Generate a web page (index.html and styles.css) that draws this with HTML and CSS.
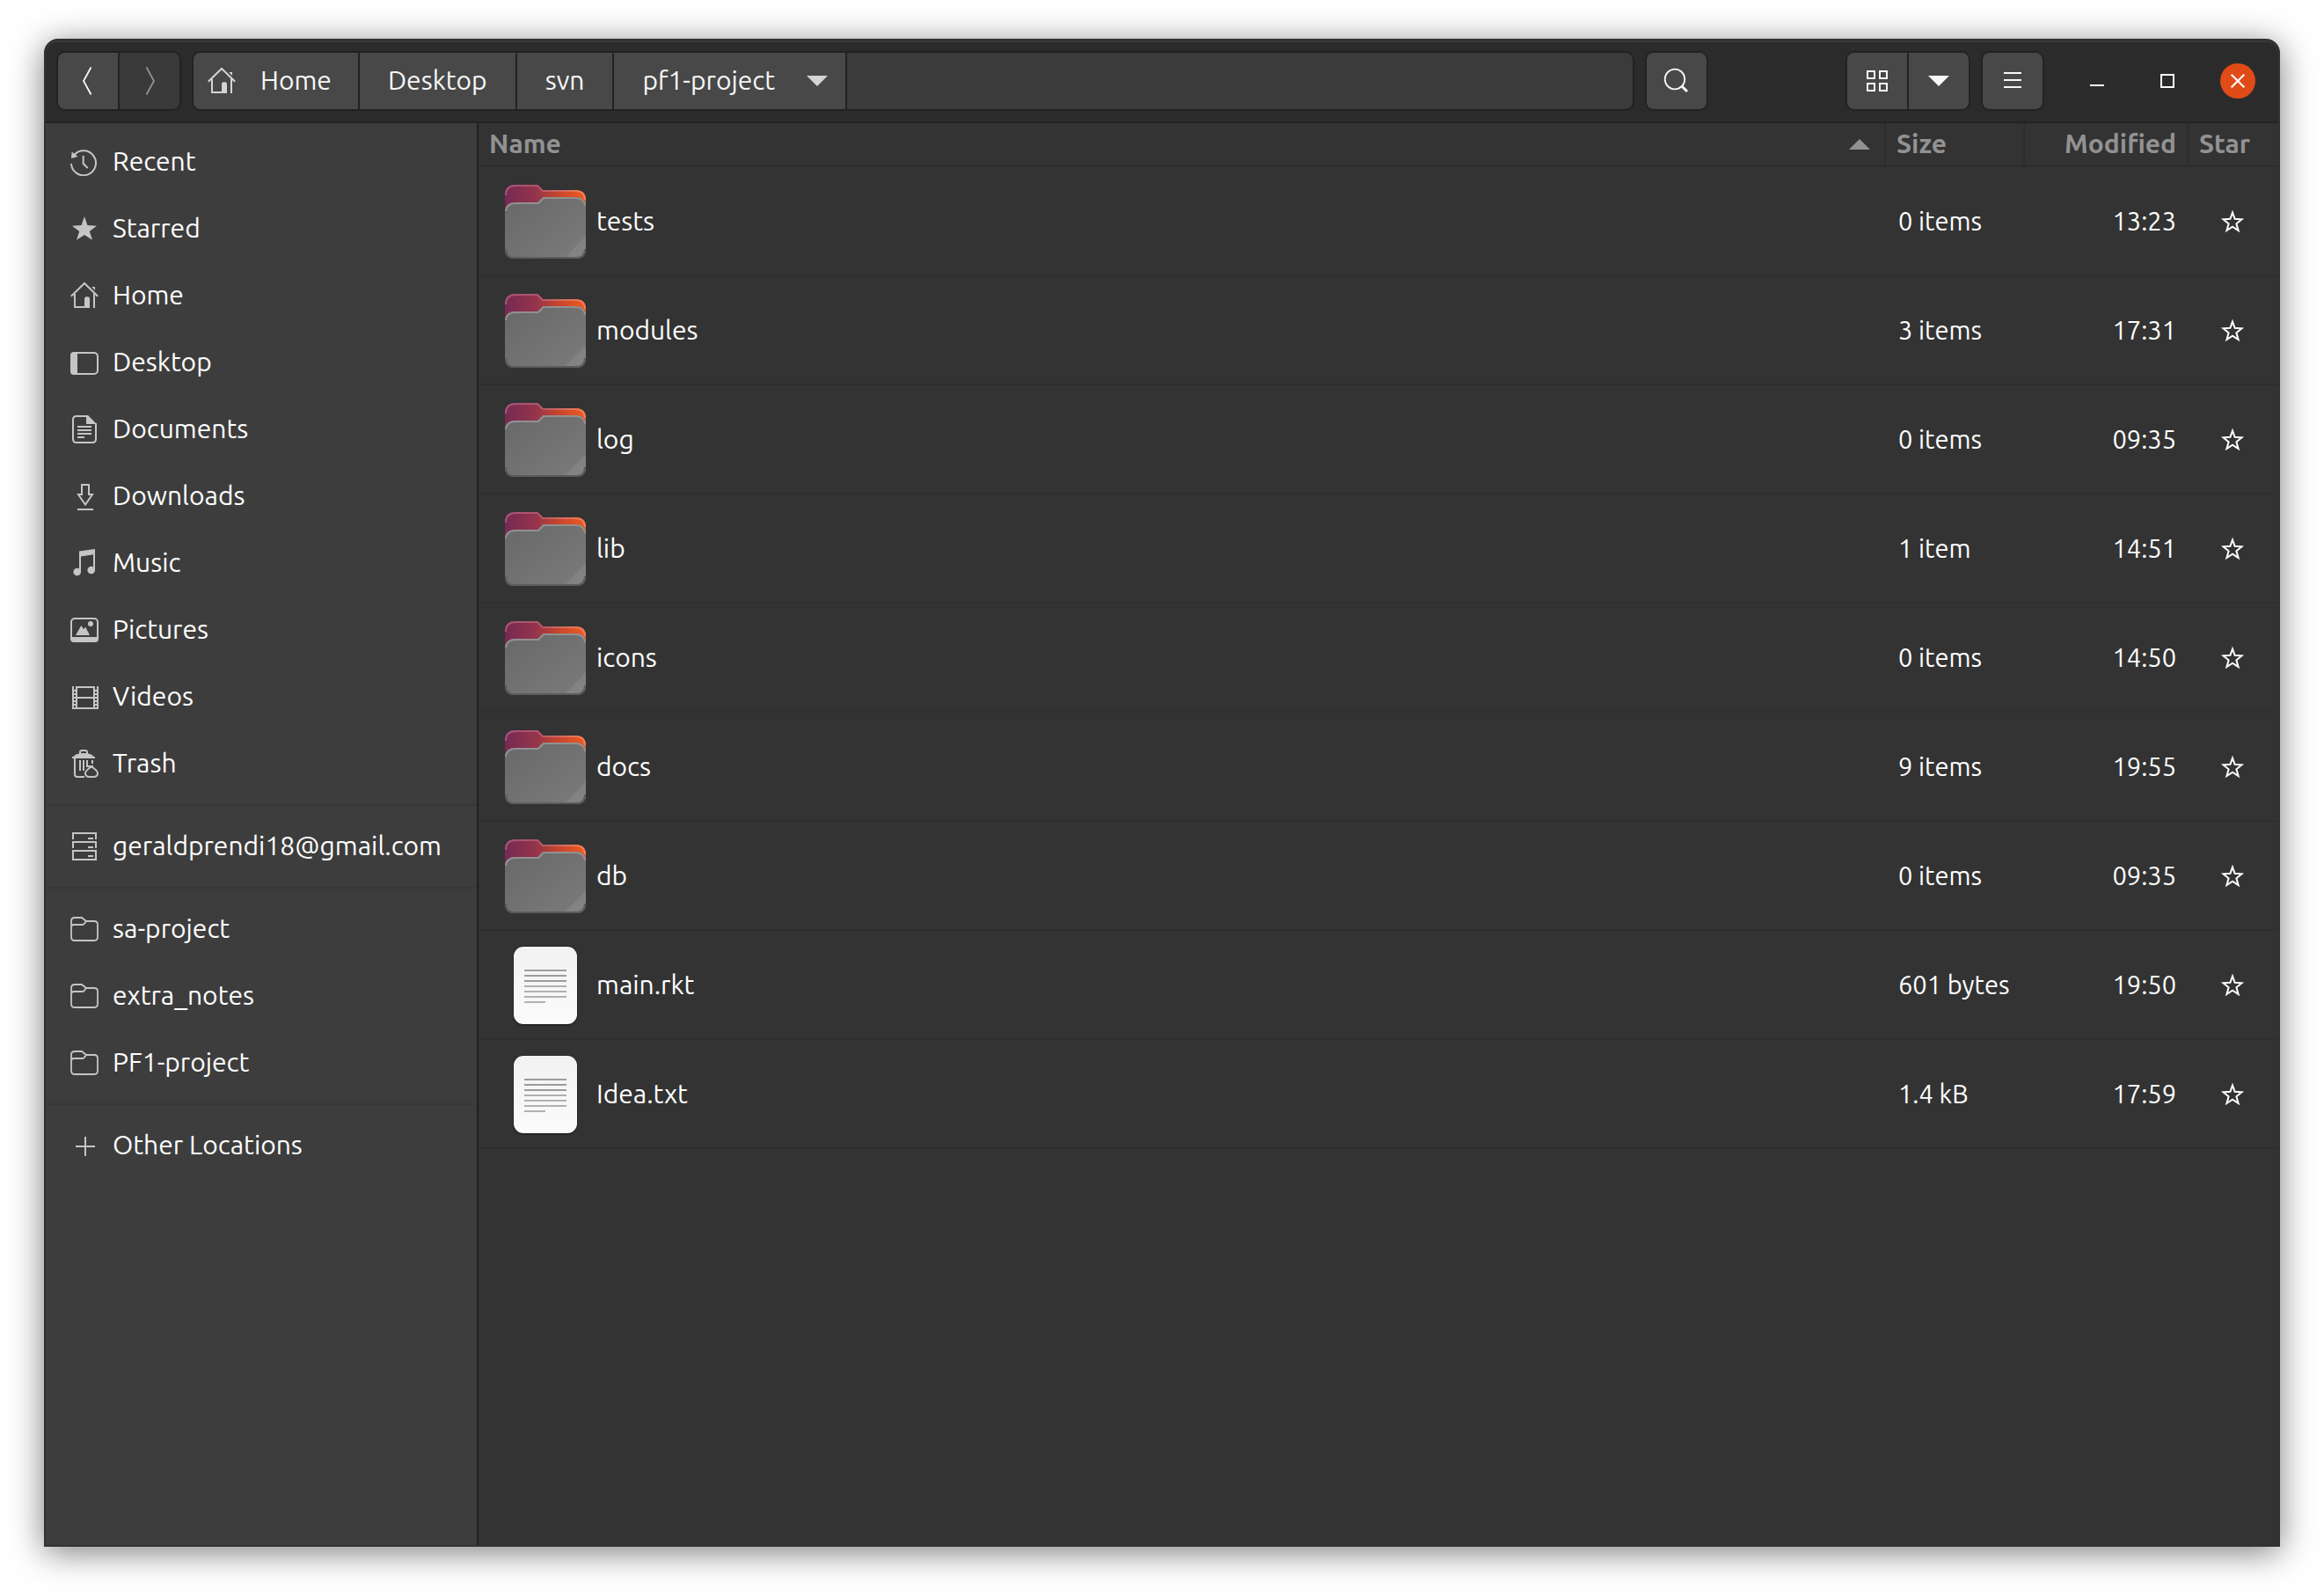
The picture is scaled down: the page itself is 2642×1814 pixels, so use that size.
FILE: index.html
```html
<!DOCTYPE html>
<html lang="en">
<head>
<meta charset="utf-8">
<meta name="viewport" content="width=device-width, initial-scale=1">
<title>pf1-project</title>
<link rel="stylesheet" href="styles.css">
</head>
<body>
<svg class="sprite" aria-hidden="true">
  <defs>
    <linearGradient id="folder-back" x1="0" y1="0" x2="1" y2="0">
      <stop offset="0" stop-color="#772953"/><stop offset=".38" stop-color="#94344c"/>
      <stop offset=".62" stop-color="#c0432f"/><stop offset="1" stop-color="#f05a22"/>
    </linearGradient>
    <linearGradient id="folder-edge" x1="0" y1="0" x2="1" y2="0">
      <stop offset="0" stop-color="#a4557c"/><stop offset=".4" stop-color="#b0556a"/><stop offset="1" stop-color="#f58055"/>
    </linearGradient>
    <linearGradient id="folder-front" x1="0" y1="0" x2="1" y2="1">
      <stop offset="0" stop-color="#686868"/><stop offset="1" stop-color="#7b7b7b"/>
    </linearGradient>
    <linearGradient id="paper" x1="0" y1="0" x2="0" y2="1">
      <stop offset="0" stop-color="#f2f2f2"/><stop offset="1" stop-color="#fbfbfb"/>
    </linearGradient>
  </defs>
  <symbol id="i-back" viewBox="0 0 32 32"><path d="M19.5.5 11 16l8.500 15.500" fill="none" stroke="currentColor" stroke-width="1.800"/></symbol>
  <symbol id="i-forward" viewBox="0 0 32 32"><path d="M12.500.5 21 16l-8.500 15.500" fill="none" stroke="currentColor" stroke-width="1.800"/></symbol>
  <symbol id="i-home" viewBox="0 0 32 32"><path d="M.8 16.700 16 2l15.200 14.700M5 14v15h14M27 13.500V30" fill="none" stroke="currentColor" stroke-width="2"/><path d="M16 30V19.500q0-2.200 2.200-2.200h1.600q2.200 0 2.200 2.200V30zM24.300 6H28v4z" fill="currentColor"/></symbol>
  <symbol id="i-down" viewBox="0 0 32 32"><path d="M4 10h24L16 22z" fill="currentColor"/></symbol>
  <symbol id="i-up" viewBox="0 0 32 32"><path d="M4 22h24L16 10z" fill="currentColor"/></symbol>
  <symbol id="i-search" viewBox="0 0 32 32"><circle cx="14" cy="14" r="11.300" fill="none" stroke="currentColor" stroke-width="1.800"/><path d="m22 22 6 6" stroke="currentColor" stroke-width="3"/></symbol>
  <symbol id="i-grid" viewBox="0 0 32 32"><path d="M5 5h8v8H5zM19 5h8v8h-8zM5 19h8v8H5zM19 19h8v8h-8z" fill="none" stroke="currentColor" stroke-width="2"/></symbol>
  <symbol id="i-menu" viewBox="0 0 32 32"><path d="M6 7h20M6 15h20M6 23h20" stroke="currentColor" stroke-width="2"/></symbol>
  <symbol id="i-min" viewBox="0 0 32 32"><path d="M8 21h16" stroke="currentColor" stroke-width="2"/></symbol>
  <symbol id="i-max" viewBox="0 0 32 32"><path d="M9 9h14v14H9z" fill="none" stroke="currentColor" stroke-width="2"/></symbol>
  <symbol id="i-close" viewBox="0 0 32 32"><path d="m8.700 8.700 14.600 14.600m0-14.600L8.700 23.300" stroke="currentColor" stroke-width="2.200"/></symbol>
  <symbol id="i-recent" viewBox="0 0 32 32"><path d="M1 18A14 14 0 1 0 4.500 8M14.700 9v9l5 5" fill="none" stroke="currentColor" stroke-width="2"/><path d="m1.700 4.500 6.800 5.500-7.500 2z" fill="currentColor"/></symbol>
  <symbol id="i-starred" viewBox="0 0 32 32"><path d="m16 2 3.400 10L30 12.700 21.800 19 25 28.700l-9-5.700-9 5.700L10.200 19 2 12.700l10.600-.7z" fill="currentColor"/></symbol>
  <symbol id="i-desktop" viewBox="0 0 32 32"><rect x="1" y="5" width="30" height="24" rx="4" fill="none" stroke="currentColor" stroke-width="2"/><path d="M8 4v26H4q-4 0-4-4V8q0-4 4-4z" fill="currentColor"/></symbol>
  <symbol id="i-documents" viewBox="0 0 32 32"><path d="M20 1H7Q3 1 3 5v22q0 4 4 4h18q4 0 4-4V9M8 13h16M8 17h16M8 21h16M8 25h8" fill="none" stroke="currentColor" stroke-width="2"/><path d="M18 0h2l10 10H18z" fill="currentColor"/></symbol>
  <symbol id="i-downloads" viewBox="0 0 32 32"><path d="M13 3h8v11h4l-8 11.500L9 14h4zM8 31h18" fill="none" stroke="currentColor" stroke-width="2"/></symbol>
  <symbol id="i-music" viewBox="0 0 32 32"><path d="M10 2.500 28 0v24h-2V6.200L12 8.500V26h-2z" fill="currentColor"/><circle cx="7.700" cy="26" r="4.300" fill="currentColor"/><circle cx="23.700" cy="24" r="4.300" fill="currentColor"/></symbol>
  <symbol id="i-pictures" viewBox="0 0 32 32"><rect x="1" y="3" width="30" height="26" rx="4" fill="none" stroke="currentColor" stroke-width="2"/><path d="M0 24h32v2q0 4-4 4H4q-4 0-4-4zM6 22l6.300-11 2.700 4 2.300-2.300L22 22z" fill="currentColor"/><circle cx="23" cy="9" r="3" fill="currentColor"/></symbol>
  <symbol id="i-videos" viewBox="0 0 32 32"><path d="M7 4v26M27 4v26M7 5h20M7 17h20M7 29h20" fill="none" stroke="currentColor" stroke-width="2"/><path d="M3 4v26M31 4v26" stroke="currentColor" stroke-width="2"/><path d="M5 6v24M29 6v24" stroke="currentColor" stroke-width="2" stroke-dasharray="2 2" stroke-dashoffset="2"/></symbol>
  <symbol id="i-trash" viewBox="0 0 32 32"><path d="M11 5V3q0-2 2-2h4q2 0 2 2v2M2 9h26M5 9v19q0 3 3 3h8M11 12v12M15 12v12M19 12v8M25 12v4M20 19h6" fill="none" stroke="currentColor" stroke-width="2"/><path d="M3 9q2-5 12-5t12 5z" fill="currentColor"/><path d="M23 20q-6 4-6 7 0 4 5 4h4q5 0 5-4 0-3-6-7z" fill="none" stroke="currentColor" stroke-width="2"/></symbol>
  <symbol id="i-server" viewBox="0 0 32 32"><path d="M3 8V1h26v7M3 18v-7h26v7M3 21h26v10H3zM20 7h6M20 17h6M20 27h6" fill="none" stroke="currentColor" stroke-width="2"/></symbol>
  <symbol id="i-folder" viewBox="0 0 32 32"><path d="M1 25V7q0-4 4-4h8l5 4h9q4 0 4 4v14q0 4-4 4H5q-4 0-4-4zM1 14q0-3 3-3h10q1.500 0 2.500-2L18 7" fill="none" stroke="currentColor" stroke-width="1.800"/></symbol>
  <symbol id="i-plus" viewBox="0 0 32 32"><path d="M6 17h22M17 6v22" stroke="currentColor" stroke-width="2"/></symbol>
  <symbol id="i-star" viewBox="0 0 32 32"><path d="m16 6.500 2.600 7.300 7.900.5-6.100 5 2.200 7.700L16 22.700 9.400 27l2.200-7.700-6.100-5 7.900-.5z" fill="none" stroke="currentColor" stroke-width="2" stroke-miterlimit="10"/></symbol>
  <symbol id="f-folder" viewBox="0 0 96 96">
    <path d="M2 40V19Q2 7 14 7h25l6 6h37q12 0 12 12v20z" fill="url(#folder-back)"/>
    <path d="M3 19Q3 8 14 8h25l6 6h37q11 0 11 10" fill="none" stroke="url(#folder-edge)" stroke-width="2"/>
    <path d="M2 38q0-11 12-11h25l6-6h37q12 0 12 11v48q0 11-11 11H13Q2 91 2 80z" fill="url(#folder-front)"/>
    <path d="M94 65v15q0 10-10 10H70z" fill="#fff" opacity=".08"/>
    <path d="M3 37q1-9 11-9h26l6-6h36q10 0 11 9" fill="none" stroke="#919191" stroke-width="2"/>
    <path d="M3 80q0 10 10 10h70q10 0 10-10" fill="none" stroke="#5b5b5b" stroke-width="2"/>
  </symbol>
  <symbol id="f-text" viewBox="0 0 96 96">
    <rect x="11" y="4" width="74" height="91" rx="12" fill="#262626"/>
    <rect x="12" y="5" width="72" height="88" rx="11" fill="url(#paper)"/>
    <path d="M24 32h48M24 38h48M24 44h48" stroke="#9c9c9c" stroke-width="2"/>
    <path d="M24 50h48M24 56h48M24 62h48M24 68h24" stroke="#b0b0b0" stroke-width="2"/>
  </symbol>
</svg>

<main class="window">
  <header class="toolbar">
    <div class="group">
      <button class="tool" aria-label="Back"><svg class="icon"><use href="#i-back"/></svg></button>
      <button class="tool" aria-label="Forward" disabled><svg class="icon"><use href="#i-forward"/></svg></button>
    </div>
    <nav class="group pathbar" aria-label="Path">
      <button class="crumb crumb-home"><svg class="icon"><use href="#i-home"/></svg><span class="label">Home</span></button>
      <button class="crumb"><span class="label">Desktop</span></button>
      <button class="crumb"><span class="label">svn</span></button>
      <button class="crumb crumb-current"><span class="label">pf1-project</span><svg class="icon"><use href="#i-down"/></svg></button>
      <span class="path-rest"></span>
    </nav>
    <div class="group search"><button class="tool" aria-label="Search"><svg class="icon"><use href="#i-search"/></svg></button></div>
    <div class="group">
      <button class="tool" aria-label="Grid view"><svg class="icon"><use href="#i-grid"/></svg></button>
      <button class="tool" aria-label="View options"><svg class="icon"><use href="#i-down"/></svg></button>
    </div>
    <div class="group"><button class="tool" aria-label="Menu"><svg class="icon"><use href="#i-menu"/></svg></button></div>
    <div class="controls">
      <button class="control" aria-label="Minimize"><svg class="icon"><use href="#i-min"/></svg></button>
      <button class="control" aria-label="Maximize"><svg class="icon"><use href="#i-max"/></svg></button>
      <button class="control control-close" aria-label="Close"><svg class="icon"><use href="#i-close"/></svg></button>
    </div>
  </header>

  <div class="content">
    <nav class="sidebar" aria-label="Places">
      <ul class="places">
        <li><a class="place" href="#"><svg class="icon"><use href="#i-recent"/></svg><span class="label">Recent</span></a></li>
        <li><a class="place" href="#"><svg class="icon"><use href="#i-starred"/></svg><span class="label">Starred</span></a></li>
        <li><a class="place" href="#"><svg class="icon"><use href="#i-home"/></svg><span class="label">Home</span></a></li>
        <li><a class="place" href="#"><svg class="icon"><use href="#i-desktop"/></svg><span class="label">Desktop</span></a></li>
        <li><a class="place" href="#"><svg class="icon"><use href="#i-documents"/></svg><span class="label">Documents</span></a></li>
        <li><a class="place" href="#"><svg class="icon"><use href="#i-downloads"/></svg><span class="label">Downloads</span></a></li>
        <li><a class="place" href="#"><svg class="icon"><use href="#i-music"/></svg><span class="label">Music</span></a></li>
        <li><a class="place" href="#"><svg class="icon"><use href="#i-pictures"/></svg><span class="label">Pictures</span></a></li>
        <li><a class="place" href="#"><svg class="icon"><use href="#i-videos"/></svg><span class="label">Videos</span></a></li>
        <li><a class="place" href="#"><svg class="icon"><use href="#i-trash"/></svg><span class="label">Trash</span></a></li>
      </ul>
      <ul class="places">
        <li><a class="place" href="#"><svg class="icon"><use href="#i-server"/></svg><span class="label">geraldprendi18@gmail.com</span></a></li>
      </ul>
      <ul class="places">
        <li><a class="place" href="#"><svg class="icon"><use href="#i-folder"/></svg><span class="label">sa-project</span></a></li>
        <li><a class="place" href="#"><svg class="icon"><use href="#i-folder"/></svg><span class="label">extra_notes</span></a></li>
        <li><a class="place" href="#"><svg class="icon"><use href="#i-folder"/></svg><span class="label">PF1-project</span></a></li>
      </ul>
      <ul class="places">
        <li><a class="place" href="#"><svg class="icon"><use href="#i-plus"/></svg><span class="label">Other Locations</span></a></li>
      </ul>
    </nav>

    <section class="files">
      <table class="list">
        <colgroup><col><col class="col-size"><col class="col-modified"><col class="col-star"></colgroup>
        <thead>
          <tr>
            <th scope="col" aria-sort="ascending"><button class="sort"><span class="label">Name</span><svg class="icon"><use href="#i-up"/></svg></button></th>
            <th scope="col"><button class="sort"><span class="label">Size</span></button></th>
            <th scope="col"><button class="sort sort-end"><span class="label">Modified</span></button></th>
            <th scope="col"><button class="sort"><span class="label">Star</span></button></th>
          </tr>
        </thead>
        <tbody>
          <tr><td><div class="file"><svg class="thumb"><use href="#f-folder"/></svg>tests</div></td><td class="size">0 items</td><td class="time">13:23</td><td class="mark"><button class="star" aria-label="Star tests"><svg class="icon"><use href="#i-star"/></svg></button></td></tr>
          <tr><td><div class="file"><svg class="thumb"><use href="#f-folder"/></svg>modules</div></td><td class="size">3 items</td><td class="time">17:31</td><td class="mark"><button class="star" aria-label="Star modules"><svg class="icon"><use href="#i-star"/></svg></button></td></tr>
          <tr><td><div class="file"><svg class="thumb"><use href="#f-folder"/></svg>log</div></td><td class="size">0 items</td><td class="time">09:35</td><td class="mark"><button class="star" aria-label="Star log"><svg class="icon"><use href="#i-star"/></svg></button></td></tr>
          <tr><td><div class="file"><svg class="thumb"><use href="#f-folder"/></svg>lib</div></td><td class="size">1 item</td><td class="time">14:51</td><td class="mark"><button class="star" aria-label="Star lib"><svg class="icon"><use href="#i-star"/></svg></button></td></tr>
          <tr><td><div class="file"><svg class="thumb"><use href="#f-folder"/></svg>icons</div></td><td class="size">0 items</td><td class="time">14:50</td><td class="mark"><button class="star" aria-label="Star icons"><svg class="icon"><use href="#i-star"/></svg></button></td></tr>
          <tr><td><div class="file"><svg class="thumb"><use href="#f-folder"/></svg>docs</div></td><td class="size">9 items</td><td class="time">19:55</td><td class="mark"><button class="star" aria-label="Star docs"><svg class="icon"><use href="#i-star"/></svg></button></td></tr>
          <tr><td><div class="file"><svg class="thumb"><use href="#f-folder"/></svg>db</div></td><td class="size">0 items</td><td class="time">09:35</td><td class="mark"><button class="star" aria-label="Star db"><svg class="icon"><use href="#i-star"/></svg></button></td></tr>
          <tr><td><div class="file"><svg class="thumb"><use href="#f-text"/></svg>main.rkt</div></td><td class="size">601 bytes</td><td class="time">19:50</td><td class="mark"><button class="star" aria-label="Star main.rkt"><svg class="icon"><use href="#i-star"/></svg></button></td></tr>
          <tr><td><div class="file"><svg class="thumb"><use href="#f-text"/></svg>Idea.txt</div></td><td class="size">1.4 kB</td><td class="time">17:59</td><td class="mark"><button class="star" aria-label="Star Idea.txt"><svg class="icon"><use href="#i-star"/></svg></button></td></tr>
        </tbody>
      </table>
    </section>
  </div>
</main>
</body>
</html>
```

FILE: styles.css
```css
* {
  box-sizing: border-box;
}

body {
  display: flex;
  flex-direction: column;
  min-height: 100vh;
  margin: 0;
  padding: 44px 50px 56px;
  background: #fff;
  color: #fff;
  font: 30px/40px "Ubuntu", "Noto Sans", sans-serif;
}

button {
  display: flex;
  align-items: center;
  justify-content: center;
  margin: 0;
  padding: 0;
  border: 0;
  background: none;
  color: inherit;
  font: inherit;
}

.sprite {
  position: absolute;
  width: 0;
  height: 0;
}

.icon {
  flex: none;
  display: block;
  width: 32px;
  height: 32px;
}

.label {
  padding-bottom: 2px;
  white-space: nowrap;
}

/* Window frame */
.window {
  flex: 1;
  display: flex;
  flex-direction: column;
  overflow: hidden;
  border: 2px solid #313131;
  border-radius: 16px 16px 0 0;
  background: #333;
  box-shadow: 0 6px 38px rgba(0, 0, 0, 0.52);
}

.toolbar {
  display: flex;
  align-items: center;
  gap: 12px;
  padding: 12px 26px 12px 12px;
  border-bottom: 2px solid #232323;
  border-radius: 14px 14px 0 0;
  background: #2b2b2b;
  box-shadow: inset 0 2px #393939;
}

.group {
  display: flex;
  overflow: hidden;
  border: 2px solid #222;
  border-radius: 10px;
  background: #3b3b3b;
}

.group > * + * {
  border-left: 2px solid #222;
}

.tool {
  width: 68px;
  height: 64px;
  background: #484848;
  color: #f7f7f7;
}

.tool + .tool {
  width: 70px;
}

.tool:disabled {
  background: #3a3a3a;
  color: #919191;
}

.pathbar {
  flex: 1;
}

.crumb {
  height: 64px;
  padding: 0 32px;
  background: #484848;
  color: #f7f7f7;
}

.crumb .icon {
  color: #d4d4d4;
}

.crumb-home {
  gap: 28px;
  padding: 0 30px 0 16px;
}

.crumb-current {
  gap: 32px;
  padding-right: 16px;
}

.path-rest {
  flex: 1;
}

.search {
  margin-right: 144px;
}

.controls {
  display: flex;
  gap: 40px;
  margin-left: 28px;
}

.control {
  width: 40px;
  height: 40px;
  border-radius: 50%;
}

.control-close {
  background: #e04b17;
}

/* Places */
.content {
  flex: 1;
  display: flex;
}

.sidebar {
  flex: none;
  width: 492px;
  border-right: 2px solid #202020;
  background: #3d3d3d;
}

.places {
  margin: 0;
  padding: 8px 0;
  list-style: none;
}

.places:first-child {
  padding-top: 6px;
}

.places + .places {
  border-top: 2px solid #373737;
}

.place {
  display: flex;
  align-items: center;
  gap: 16px;
  height: 76px;
  padding-left: 28px;
  color: inherit;
  text-decoration: none;
}

.place .icon {
  color: #c5c5c5;
}

/* File list */
.files {
  flex: 1;
}

.list {
  width: 100%;
  table-layout: fixed;
  border-collapse: separate;
  border-spacing: 0;
}

.col-size {
  width: 158px;
}

.col-modified {
  width: 186px;
}

.col-star {
  width: 102px;
}

.list th {
  height: 50px;
  padding: 0;
  border-right: 2px solid #2d2d2d;
  border-bottom: 2px solid #2d2d2d;
  color: #929292;
}

.list th:last-child {
  border-right: 0;
}

.sort {
  justify-content: space-between;
  width: 100%;
  height: 48px;
  padding: 0 12px;
}

.sort-end {
  justify-content: flex-end;
}

.list td {
  height: 124px;
  padding: 0 0 0 14px;
  border-bottom: 2px solid #2f2f2f;
  white-space: nowrap;
}

.list td:first-child {
  padding-left: 28px;
}

.list .size,
.list .time {
  font-size: 29px;
}

.list .time {
  padding-right: 14px;
  text-align: right;
}

.list .mark {
  padding: 0 2px 0 0;
}

.file {
  display: flex;
  align-items: center;
  gap: 10px;
}

.thumb {
  flex: none;
  width: 96px;
  height: 96px;
}

.star {
  width: 100%;
}
```
